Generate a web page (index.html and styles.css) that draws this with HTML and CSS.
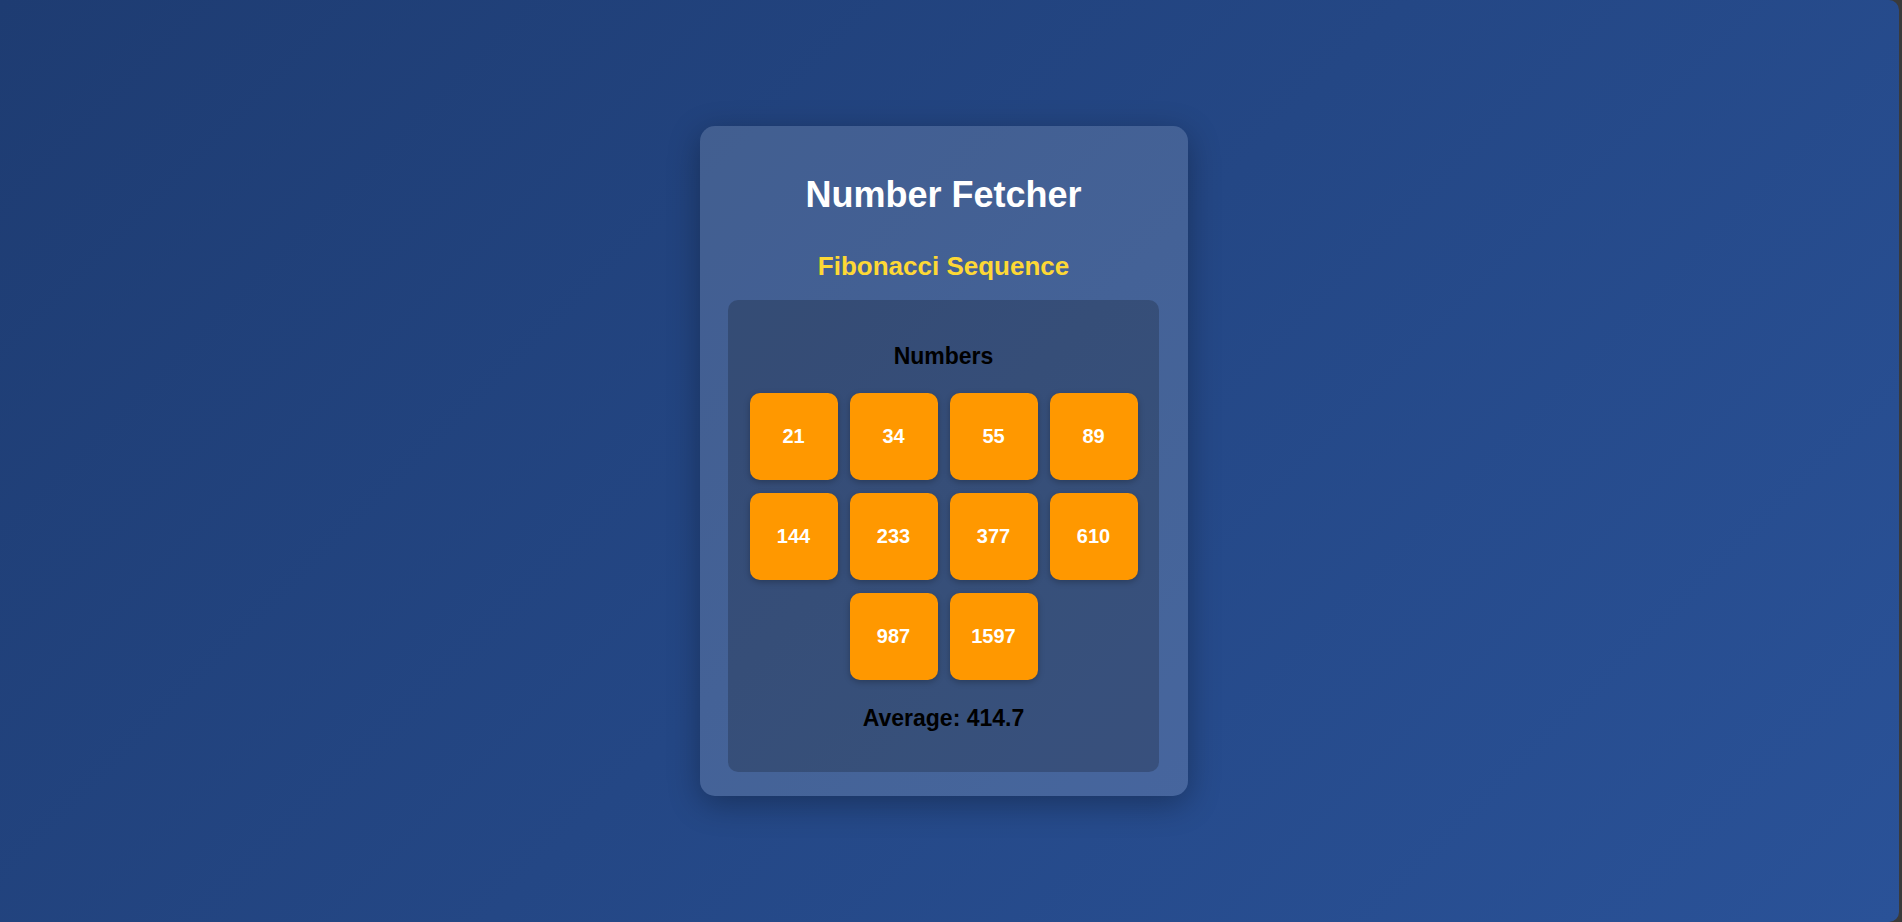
FILE: index.html
```html
<!DOCTYPE html>
<html lang="en">
<head>
<meta charset="utf-8">
<title>Number Fetcher</title>
<link rel="stylesheet" href="styles.css">
</head>
<body>
<div class="screen">
  <div class="card">
    <h1 class="title">Number Fetcher</h1>
    <h2 class="subtitle">Fibonacci Sequence</h2>
    <div class="panel">
      <h3 class="panel-title">Numbers</h3>
      <div class="tiles">
        <div class="tile">21</div>
        <div class="tile">34</div>
        <div class="tile">55</div>
        <div class="tile">89</div>
        <div class="tile">144</div>
        <div class="tile">233</div>
        <div class="tile">377</div>
        <div class="tile">610</div>
        <div class="tile">987</div>
        <div class="tile">1597</div>
      </div>
      <p class="average">Average: 414.7</p>
    </div>
  </div>
</div>
</body>
</html>
```

FILE: styles.css
```css
html {
  background: #3a3a3a;
}
body {
  margin: 0;
  font-family: "Liberation Sans", Arial, sans-serif;
}
.screen {
  box-sizing: border-box;
  width: calc(100vw - 3px);
  height: 100vh;
  border-radius: 0 10px 10px 0;
  background: linear-gradient(135deg, #1e3c72 0%, #2a5298 100%);
  display: flex;
  align-items: center;
  justify-content: center;
  padding-right: 11px;
}
.card {
  box-sizing: border-box;
  width: 488px;
  padding: 28px 29px 24px 28px;
  border-radius: 15px;
  background: rgba(255, 255, 255, 0.15);
  box-shadow: 0 8px 32px rgba(0, 0, 0, 0.3);
  text-align: center;
}
.title {
  margin: 21px 0 0;
  font-size: 36px;
  font-weight: bold;
  color: #ffffff;
  line-height: 40px;
}
.subtitle {
  margin: 37px 0 19px;
  font-size: 26px;
  font-weight: bold;
  color: #fdd835;
  line-height: 29px;
}
.panel {
  padding: 20px;
  border-radius: 10px;
  background: rgba(0, 0, 0, 0.2);
}
.panel-title {
  margin: 23px 0 24px;
  font-size: 23px;
  font-weight: bold;
  color: #000000;
  line-height: 26px;
}
.tiles {
  display: flex;
  flex-wrap: wrap;
  justify-content: center;
  column-gap: 12px;
  row-gap: 13px;
}
.tile {
  width: 88px;
  height: 87px;
  border-radius: 10px;
  background: #ff9800;
  color: #ffffff;
  font-size: 20px;
  font-weight: bold;
  display: flex;
  align-items: center;
  justify-content: center;
  box-shadow: 0 2px 6px rgba(0, 0, 0, 0.25);
}
.average {
  margin: 25px 0 21px;
  font-size: 23px;
  font-weight: bold;
  color: #000000;
  line-height: 26px;
}
```
